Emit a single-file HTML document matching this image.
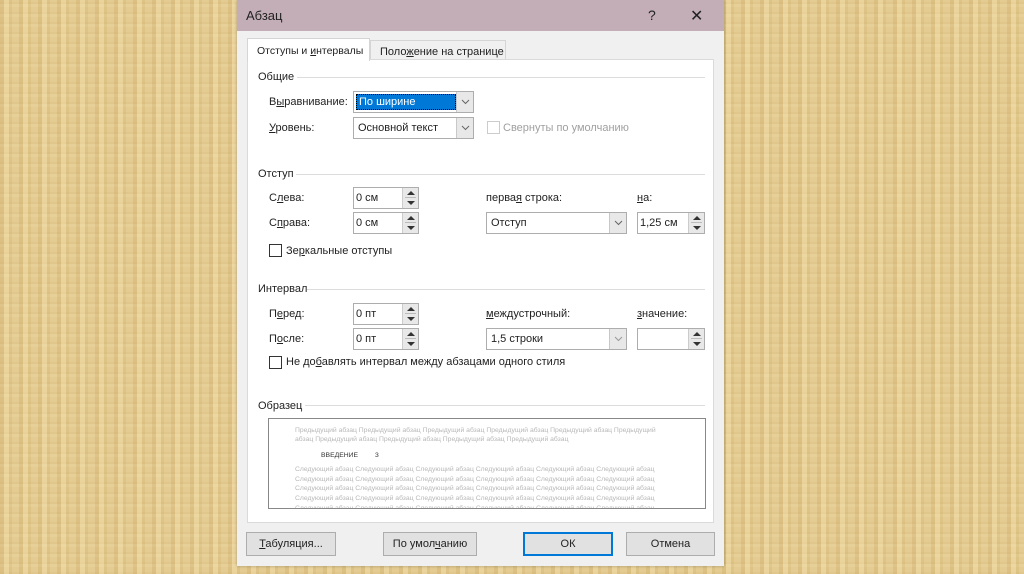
<!DOCTYPE html>
<html><head><meta charset="utf-8"><style>
*{margin:0;padding:0;box-sizing:border-box}
body{width:1024px;height:574px;overflow:hidden;position:relative;font-family:"Liberation Sans",sans-serif;font-size:11px;color:#222;
background-color:#e4cb91;
background-image:repeating-linear-gradient(90deg,rgba(190,155,80,.22) 0 4px,rgba(255,238,190,.25) 4px 9px,rgba(185,150,75,.15) 9px 12px,transparent 12px 19px),repeating-linear-gradient(0deg,rgba(195,160,90,.10) 0 2px,transparent 2px 7px,rgba(255,240,200,.12) 7px 10px);}
.a{position:absolute;white-space:nowrap}
.dlg{position:absolute;left:237px;top:0;width:487px;height:566px;background:#f0f0f0;box-shadow:0 0 3px rgba(0,0,0,.3)}
.title{position:absolute;left:237px;top:0;width:487px;height:31px;background:#c3aeb8}
.panel{position:absolute;left:247px;top:59px;width:467px;height:464px;background:#fff;border:1px solid #dadada}
.line{position:absolute;height:1px;background:#dcdcdc}
.box{position:absolute;border:1px solid #adadad;background:#fff}
.sel .arr{position:absolute;right:0;top:0;bottom:0;width:17px;background:#e8e8e8;border-left:1px solid #c8c8c8}
.arr svg{position:absolute;left:4px;top:7px}
.spin .sp{position:absolute;right:0;top:0;bottom:0;width:16px;background:#e8e8e8;border-left:1px solid #ccc}
.sp i{position:absolute;left:4px;width:0;height:0;border-left:4px solid transparent;border-right:4px solid transparent}
.sp i.u{top:3px;border-bottom:4px solid #333}
.sp i.d{bottom:3px;border-top:4px solid #333}
.sp b{position:absolute;left:2px;right:2px;top:9px;height:1px;background:#bbb}
.cb{position:absolute;width:13px;height:13px;border:1px solid #333;background:#fff}
.btn{position:absolute;top:532px;height:24px;background:#e1e1e1;border:1px solid #adadad;text-align:center;line-height:22px;font-size:11px}
u{text-decoration:underline}
.pv{position:absolute;font-size:6.8px;color:#b8b8b8;white-space:nowrap}
</style></head><body>
<div class="dlg"></div>
<div class="title"></div>
<div class="a" style="left:246px;top:8px;font-size:13px;color:#222">Абзац</div>
<div class="a" style="left:648px;top:7px;font-size:14px">?</div>
<div class="a" style="left:690px;top:6px;font-size:16px">✕</div>
<div class="a" style="left:370px;top:40px;width:136px;height:20px;background:#f0f0f0;border:1px solid #d5d5d5;padding:5px 0 0 9px">Поло<u>ж</u>ение на странице</div>
<div class="panel"></div>
<div class="a" style="left:247px;top:38px;width:123px;height:23px;background:#fff;border:1px solid #d5d5d5;border-bottom:none;padding:6px 0 0 9px;font-size:10.5px">Отступы и <u>и</u>нтервалы</div>

<div class="a" style="left:258px;top:71px">Общие</div><div class="line" style="left:297px;top:77px;width:408px"></div>
<div class="a" style="left:269px;top:96px">В<u>ы</u>равнивание:</div>
<div class="box sel" style="left:353px;top:91px;width:121px;height:22px"><div style="position:absolute;left:2px;top:2px;width:100px;height:16px;background:#0078d7;color:#fff;padding:1px 2px;border:1px dotted #000">По ширине</div><div class="arr"><svg width="9" height="6"><path d="M1 1l3.5 3.5L8 1" fill="none" stroke="#666"/></svg></div></div>
<div class="a" style="left:269px;top:122px"><u>У</u>ровень:</div>
<div class="box sel" style="left:353px;top:117px;width:121px;height:22px"><div class="a" style="left:4px;top:4px">Основной текст</div><div class="arr"><svg width="9" height="6"><path d="M1 1l3.5 3.5L8 1" fill="none" stroke="#666"/></svg></div></div>
<div class="cb" style="left:487px;top:121px;border-color:#ccc"></div>
<div class="a" style="left:503px;top:122px;color:#a0a0a0">Свернуты по умолчанию</div>

<div class="a" style="left:258px;top:168px">Отступ</div><div class="line" style="left:296px;top:174px;width:409px"></div>
<div class="a" style="left:269px;top:192px">С<u>л</u>ева:</div>
<div class="box spin" style="left:353px;top:187px;width:66px;height:22px"><div class="a" style="left:2px;top:4px">0 см</div><div class="sp"><i class="u"></i><b></b><i class="d"></i></div></div>
<div class="a" style="left:269px;top:217px">С<u>п</u>рава:</div>
<div class="box spin" style="left:353px;top:212px;width:66px;height:22px"><div class="a" style="left:2px;top:4px">0 см</div><div class="sp"><i class="u"></i><b></b><i class="d"></i></div></div>
<div class="a" style="left:486px;top:192px">перва<u>я</u> строка:</div>
<div class="box sel" style="left:486px;top:212px;width:141px;height:22px"><div class="a" style="left:4px;top:4px">Отступ</div><div class="arr"><svg width="9" height="6"><path d="M1 1l3.5 3.5L8 1" fill="none" stroke="#666"/></svg></div></div>
<div class="a" style="left:637px;top:192px"><u>н</u>а:</div>
<div class="box spin" style="left:637px;top:212px;width:68px;height:22px"><div class="a" style="left:2px;top:4px">1,25 см</div><div class="sp"><i class="u"></i><b></b><i class="d"></i></div></div>
<div class="cb" style="left:269px;top:244px"></div>
<div class="a" style="left:286px;top:245px">Зе<u>р</u>кальные отступы</div>

<div class="a" style="left:258px;top:283px">Интервал</div><div class="line" style="left:307px;top:289px;width:398px"></div>
<div class="a" style="left:269px;top:308px">П<u>е</u>ред:</div>
<div class="box spin" style="left:353px;top:303px;width:66px;height:22px"><div class="a" style="left:2px;top:4px">0 пт</div><div class="sp"><i class="u"></i><b></b><i class="d"></i></div></div>
<div class="a" style="left:269px;top:333px">П<u>о</u>сле:</div>
<div class="box spin" style="left:353px;top:328px;width:66px;height:22px"><div class="a" style="left:2px;top:4px">0 пт</div><div class="sp"><i class="u"></i><b></b><i class="d"></i></div></div>
<div class="a" style="left:486px;top:308px"><u>м</u>еждустрочный:</div>
<div class="box sel" style="left:486px;top:328px;width:141px;height:22px"><div class="a" style="left:4px;top:4px">1,5 строки</div><div class="arr"><svg width="9" height="6"><path d="M1 1l3.5 3.5L8 1" fill="none" stroke="#999"/></svg></div></div>
<div class="a" style="left:637px;top:308px"><u>з</u>начение:</div>
<div class="box spin" style="left:637px;top:328px;width:68px;height:22px"><div class="sp"><i class="u"></i><b></b><i class="d"></i></div></div>
<div class="cb" style="left:269px;top:356px"></div>
<div class="a" style="left:286px;top:356px">Не до<u>б</u>авлять интервал между абзацами одного стиля</div>

<div class="a" style="left:258px;top:400px">Образец</div><div class="line" style="left:305px;top:405px;width:400px"></div>
<div class="a" style="left:268px;top:418px;width:438px;height:91px;border:1px solid #888;background:#fff;overflow:hidden">
<div class="pv" style="left:26px;top:8px">Предыдущий абзац Предыдущий абзац Предыдущий абзац Предыдущий абзац Предыдущий абзац Предыдущий</div>
<div class="pv" style="left:26px;top:17px">абзац Предыдущий абзац Предыдущий абзац Предыдущий абзац Предыдущий абзац</div>
<div class="pv" style="left:52px;top:33px;color:#333">ВВЕДЕНИЕ &nbsp; &nbsp; &nbsp; &nbsp; 3</div>
<div class="pv" style="left:26px;top:47px">Следующий абзац Следующий абзац Следующий абзац Следующий абзац Следующий абзац Следующий абзац</div>
<div class="pv" style="left:26px;top:57px">Следующий абзац Следующий абзац Следующий абзац Следующий абзац Следующий абзац Следующий абзац</div>
<div class="pv" style="left:26px;top:66px">Следующий абзац Следующий абзац Следующий абзац Следующий абзац Следующий абзац Следующий абзац</div>
<div class="pv" style="left:26px;top:76px">Следующий абзац Следующий абзац Следующий абзац Следующий абзац Следующий абзац Следующий абзац</div>
<div class="pv" style="left:26px;top:86px">Следующий абзац Следующий абзац Следующий абзац Следующий абзац Следующий абзац Следующий абзац</div>
</div>

<div class="btn" style="left:246px;width:90px"><u>Т</u>абуляция...</div>
<div class="btn" style="left:383px;width:94px">По умол<u>ч</u>анию</div>
<div class="btn" style="left:523px;width:90px;border:2px solid #0078d7;line-height:20px">ОК</div>
<div class="btn" style="left:626px;width:89px">Отмена</div>
</body></html>
